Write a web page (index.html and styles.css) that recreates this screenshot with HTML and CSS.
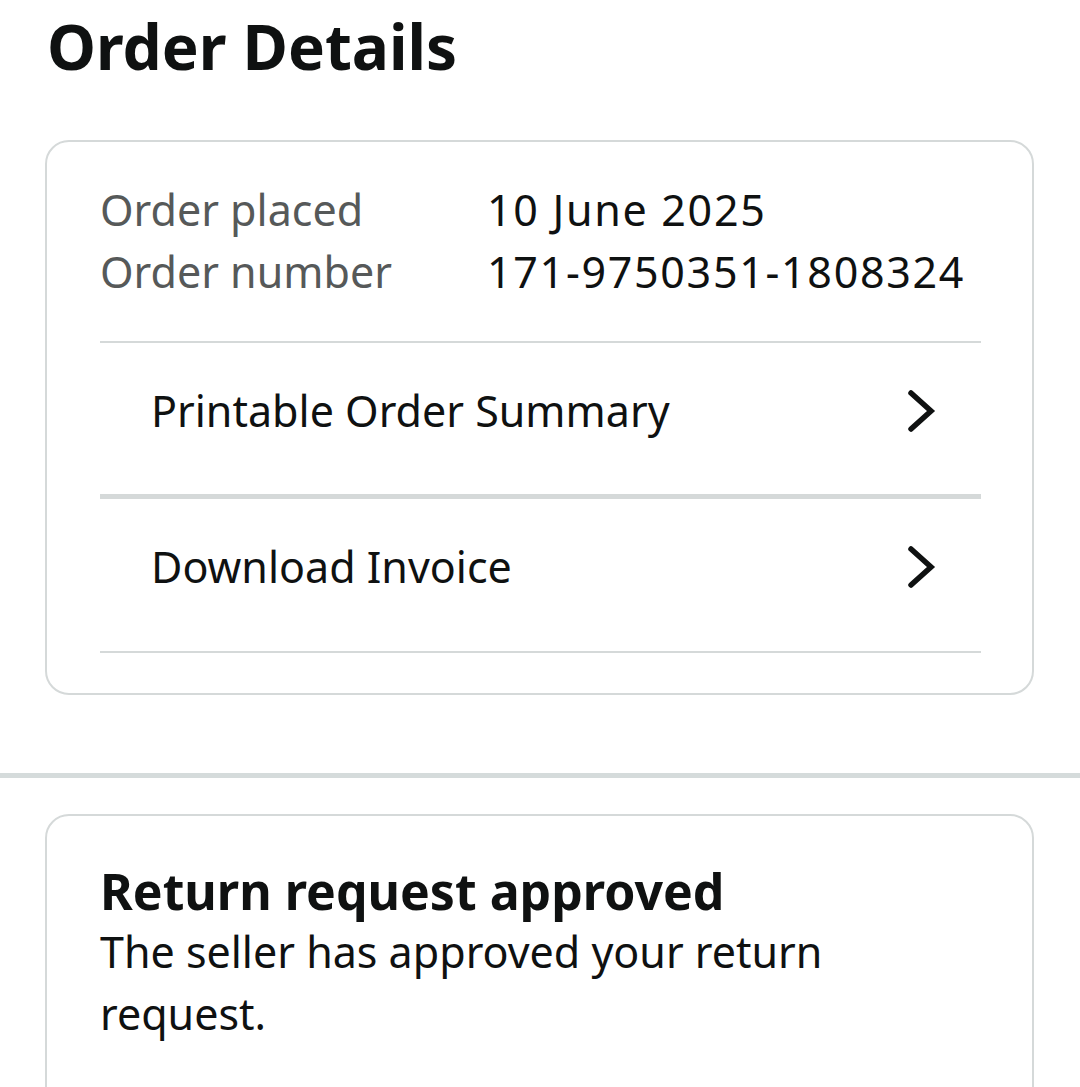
FILE: index.html
```html
<!DOCTYPE html>
<html lang="en">
<head>
<meta charset="utf-8">
<title>Order Details</title>
<link rel="stylesheet" href="styles.css">
</head>
<body>
<main class="page">
  <h1 class="page-title">Order Details</h1>

  <section class="card order-card">
    <dl class="order-info">
      <dt>Order placed</dt>
      <dd>10 June 2025</dd>
      <dt>Order number</dt>
      <dd>171-9750351-1808324</dd>
    </dl>
    <div class="link-list">
      <a class="link-row" href="#">
        <span>Printable Order Summary</span>
        <svg class="chevron" viewBox="0 0 30 48" width="30" height="48" aria-hidden="true"><polyline points="5,6 25,24 5,42" fill="none" stroke="#0f1111" stroke-width="5.5" stroke-linecap="round" stroke-linejoin="miter"/></svg>
      </a>
      <a class="link-row" href="#">
        <span>Download Invoice</span>
        <svg class="chevron" viewBox="0 0 30 48" width="30" height="48" aria-hidden="true"><polyline points="5,6 25,24 5,42" fill="none" stroke="#0f1111" stroke-width="5.5" stroke-linecap="round" stroke-linejoin="miter"/></svg>
      </a>
    </div>
  </section>

  <hr class="section-sep">

  <section class="card status-card">
    <h2 class="status-title">Return request approved</h2>
    <p class="status-text">The seller has approved your return request.</p>
  </section>
</main>
</body>
</html>
```

FILE: styles.css
```css
* {
  box-sizing: border-box;
}

html, body {
  margin: 0;
  padding: 0;
  background: #ffffff;
}

body {
  font-family: "Noto Sans", "Open Sans", Arial, sans-serif;
  color: #0f1111;
}

.page {
  display: flex;
  flex-direction: column;
}

.page-title {
  margin: 0;
  padding: 6px 0 0 47px;
  font-size: 62px;
  line-height: 80px;
  font-weight: 700;
  color: #0f1111;
}

.card {
  margin-left: 45px;
  width: 989px;
  border: 2px solid #d5d9d9;
  border-radius: 24px;
  background: #ffffff;
}

.order-card {
  margin-top: 54px;
  padding: 37px 51px 40px 53px;
}

.order-info {
  display: grid;
  grid-template-columns: 387px 1fr;
  margin: 0 0 38px 0;
  font-size: 43px;
  line-height: 62px;
}

.order-info dt {
  color: #565959;
}

.order-info dd {
  margin: 0;
  color: #0f1111;
  letter-spacing: 1.7px;
}

.link-list {
  display: flex;
  flex-direction: column;
  border-top: 2px solid #d5d9d9;
}

.link-row {
  display: flex;
  align-items: center;
  justify-content: space-between;
  padding: 37px 45px 52px 51px;
  border-bottom: 2px solid #d5d9d9;
  font-size: 43px;
  line-height: 62px;
  color: #0f1111;
  text-decoration: none;
}

.link-list .link-row:first-child {
  border-bottom: 5px solid #d5d9d9;
}

.link-list .link-row:last-child {
  padding-bottom: 53px;
}

.chevron {
  display: block;
  flex-shrink: 0;
}

.section-sep {
  margin: 78px 0 0 0;
  height: 5px;
  border: 0;
  background: #d5dbdb;
}

.status-card {
  margin-top: 36px;
  padding: 45px 51px 120px 53px;
  border-bottom-left-radius: 0;
  border-bottom-right-radius: 0;
}

.status-title {
  margin: 0;
  font-size: 50px;
  line-height: 60px;
  font-weight: 700;
  color: #0f1111;
}

.status-text {
  margin: 0;
  max-width: 800px;
  font-size: 43px;
  line-height: 62px;
  color: #0f1111;
}
```
